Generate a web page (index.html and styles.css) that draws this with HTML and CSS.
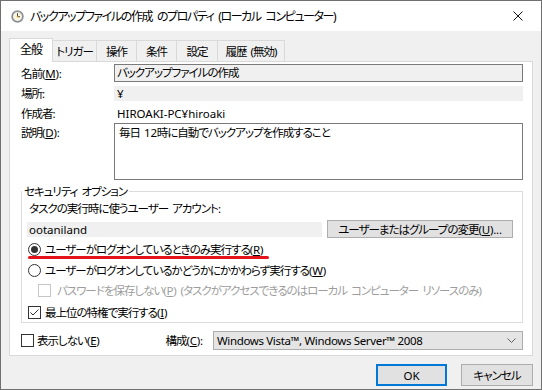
FILE: index.html
```html
<!DOCTYPE html>
<html lang="ja">
<head>
<meta charset="utf-8">
<title>プロパティ</title>
<link rel="stylesheet" href="styles.css">
</head>
<body>
<div class="window">
  <div class="titlebar">
    <svg class="appicon" width="13" height="13" viewBox="0 0 13 13">
      <circle cx="6.5" cy="6.5" r="6.2" fill="#8d949c"/>
      <circle cx="6.5" cy="6.5" r="4.9" fill="#fbf6e2" stroke="#5f666e" stroke-width="0.6"/>
      <path d="M6.5 3.2V6.7H9" fill="none" stroke="#444" stroke-width="1"/>
      <circle cx="6.5" cy="6.6" r="0.8" fill="#d9a400"/>
    </svg>
    <span class="title">バックアップファイルの作成 のプロパティ (ローカル コンピューター)</span>
    <span class="close">
      <svg width="10" height="10" viewBox="0 0 10 10"><path d="M0.5 0.5L9.5 9.5M9.5 0.5L0.5 9.5" stroke="#111" stroke-width="1"/></svg>
    </span>
  </div>

  <div class="tabs">
    <div class="tab sel w1">全般</div>
    <div class="tab w2">トリガー</div>
    <div class="tab w3">操作</div>
    <div class="tab w3">条件</div>
    <div class="tab w4">設定</div>
    <div class="tab w5">履歴 (無効)</div>
  </div>

  <div class="panel">
    <div class="row r-name">
      <span class="lbl">名前<span class="latin">(<u>M</u>):</span></span>
      <div class="field ro">バックアップファイルの作成</div>
    </div>
    <div class="row r-loc">
      <span class="lbl">場所:</span>
      <div class="field flat">¥</div>
    </div>
    <div class="row r-auth">
      <span class="lbl">作成者:</span>
      <span class="val latin">HIROAKI-PC¥hiroaki</span>
    </div>
    <div class="row r-desc">
      <span class="lbl">説明<span class="latin">(<u>D</u>):</span></span>
      <div class="textarea">毎日 <span class="latin">12</span>時に自動でバックアップを作成すること</div>
    </div>

    <fieldset class="group">
      <legend>セキュリティ オプション</legend>
      <div class="acct-label">タスクの実行時に使うユーザー アカウント:</div>
      <div class="acct-row">
        <div class="acct-field latin">ootaniland</div>
        <div class="btn change">ユーザーまたはグループの変更<span class="latin">(<u>U</u>)...</span></div>
      </div>
      <div class="opt o1">
        <svg class="box" width="13" height="13" viewBox="0 0 13 13"><circle cx="6.5" cy="6.5" r="6" fill="#fff" stroke="#333" stroke-width="1"/><circle cx="6.5" cy="6.5" r="3.5" fill="#333"/></svg>
        <span>ユーザーがログオンしているときのみ実行する<span class="latin">(<u>R</u>)</span></span>
        <span class="mark"></span>
      </div>
      <div class="opt o2">
        <svg class="box" width="13" height="13" viewBox="0 0 13 13"><circle cx="6.5" cy="6.5" r="6" fill="#fff" stroke="#333" stroke-width="1"/></svg>
        <span>ユーザーがログオンしているかどうかにかかわらず実行する<span class="latin">(<u>W</u>)</span></span>
      </div>
      <div class="opt o3 disabled">
        <svg class="box" width="13" height="13" viewBox="0 0 13 13"><rect x="0.5" y="0.5" width="12" height="12" fill="#fff" stroke="#c6c6c6" stroke-width="1"/></svg>
        <span>パスワードを保存しない<span class="latin">(<u>P</u>)</span> (タスクがアクセスできるのはローカル コンピューター リソースのみ)</span>
      </div>
      <div class="opt o4">
        <svg class="box" width="13" height="13" viewBox="0 0 13 13"><rect x="0.5" y="0.5" width="12" height="12" fill="#fff" stroke="#333" stroke-width="1"/><path d="M2.5 6.5L5 9L10.5 3.5" fill="none" stroke="#333" stroke-width="1"/></svg>
        <span>最上位の特権で実行する<span class="latin">(<u>I</u>)</span></span>
      </div>
    </fieldset>

    <div class="bottom">
      <div class="opt hide">
        <svg class="box" width="13" height="13" viewBox="0 0 13 13"><rect x="0.5" y="0.5" width="12" height="12" fill="#fff" stroke="#333" stroke-width="1"/></svg>
        <span>表示しない<span class="latin">(<u>E</u>)</span></span>
      </div>
      <span class="cfg-label">構成<span class="latin">(<u>C</u>):</span></span>
      <div class="combo">
        <span class="combo-text">Windows Vista™, Windows Server™ 2008</span>
        <svg class="chev" width="9" height="5" viewBox="0 0 9 5"><path d="M0.5 0.5L4.5 4.5L8.5 0.5" fill="none" stroke="#606060" stroke-width="1"/></svg>
      </div>
    </div>
  </div>

  <div class="buttons">
    <div class="btn ok latin">OK</div>
    <div class="btn cancel">キャンセル</div>
  </div>
</div>
</body>
</html>
```

FILE: styles.css
```css
html, body {
  margin: 0;
  padding: 0;
  background: #ffffff;
}

body {
  font-family: "Noto Sans", "Noto Sans CJK JP", sans-serif;
  font-size: 11.5px;
  letter-spacing: -1px;
  word-spacing: 2px;
  font-feature-settings: "palt";
  color: #000;
}

.latin {
  letter-spacing: -0.2px;
  word-spacing: 0;
}

u {
  text-decoration: underline;
  text-underline-offset: 1px;
}

.window {
  width: 542px;
  height: 390px;
  box-sizing: border-box;
  border: 1px solid #707070;
  background: #f0f0f0;
  display: flex;
  flex-direction: column;
  overflow: hidden;
}

/* title bar */
.titlebar {
  height: 30px;
  flex: none;
  background: #fff;
  display: flex;
  align-items: center;
}

.appicon {
  margin-left: 10px;
  flex: none;
}

.title {
  margin-left: 6px;
  line-height: 15px;
  white-space: nowrap;
  font-size: 12px;
  letter-spacing: -1.4px;
  word-spacing: 3px;
}

.close {
  margin-left: auto;
  width: 46px;
  height: 30px;
  display: flex;
  align-items: center;
  justify-content: center;
}

/* tabs */
.tabs {
  display: flex;
  align-items: flex-end;
  height: 23px;
  margin: 7px 0 0 8px;
  flex: none;
}

.tab {
  box-sizing: border-box;
  height: 21px;
  border: 1px solid #d9d9d9;
  border-bottom: none;
  margin-left: -1px;
  background: #f0f0f0;
  display: flex;
  align-items: center;
  justify-content: center;
  line-height: 15px;
  white-space: nowrap;
}

.tab.sel {
  height: 24px;
  margin-left: 0;
  margin-bottom: -1px;
  background: #fff;
  position: relative;
  z-index: 1;
  padding-bottom: 2px;
  font-size: 12px;
}

.w1 { width: 44px; }
.w2 { width: 45px; }
.w3 { width: 41px; }
.w4 { width: 42px; }
.w5 { width: 68px; }

/* panel */
.panel {
  margin: 0 8px;
  background: #fff;
  border: 1px solid #d9d9d9;
  padding: 2px 9px 5px 11px;
  flex: none;
}

.row {
  display: flex;
  align-items: center;
}

.lbl {
  width: 93px;
  flex: none;
  line-height: 15px;
}

.field {
  flex: 1;
  box-sizing: border-box;
  line-height: 15px;
  white-space: nowrap;
}

.field.ro {
  height: 18px;
  border: 1px solid #7a7a7a;
  background: #f0f0f0;
  padding: 0 2px;
  line-height: 16px;
}

.r-loc {
  margin-top: 4px;
}

.field.flat {
  height: 15px;
  background: #f0f0f0;
  padding: 0 3px;
}

.r-auth {
  margin-top: 5px;
  height: 15px;
}

.val {
  margin-left: 3px;
  line-height: 15px;
  letter-spacing: 0;
}

.r-desc {
  margin-top: 2px;
  align-items: flex-start;
}

.r-desc .lbl {
  margin-top: 2px;
}

.textarea {
  flex: 1;
  box-sizing: border-box;
  height: 57px;
  border: 1px solid #7a7a7a;
  background: #fff;
  padding: 1px 4px;
  line-height: 15px;
}

/* group box */
.group {
  margin: 4px 0 0 0;
  padding: 2px 9px 2px 6px;
  border: 1px solid #dcdcdc;
  min-width: 0;
}

.group legend {
  padding: 0 2px;
  margin-left: -6px;
  line-height: 15px;
}

.acct-label {
  line-height: 15px;
  padding-left: 1px;
}

.acct-row {
  display: flex;
  align-items: center;
  height: 18px;
  margin-top: 4px;
}

.acct-field {
  width: 295px;
  box-sizing: border-box;
  height: 15px;
  line-height: 15px;
  background: #f0f0f0;
  margin-left: -1px;
  padding-left: 2px;
  letter-spacing: 0;
}

.btn {
  box-sizing: border-box;
  background: #e1e1e1;
  border: 1px solid #adadad;
  display: flex;
  align-items: center;
  justify-content: center;
  line-height: 15px;
  white-space: nowrap;
}

.btn.change {
  margin-left: auto;
  width: 186px;
  height: 18px;
}

.opt {
  display: flex;
  align-items: center;
  height: 16px;
  line-height: 15px;
  white-space: nowrap;
  position: relative;
}

.opt .box {
  flex: none;
  margin-right: 4px;
}

.o1 { margin-top: 3px; }
.o2 { margin-top: 5px; }
.o3 { margin-top: 4px; }
.o4 { margin-top: 6px; }

.o3 .box {
  margin-left: 10px;
  margin-right: 6px;
}

.disabled {
  color: #9d9d9d;
}

.mark {
  position: absolute;
  left: 0;
  top: 15px;
  width: 241px;
  height: 3px;
  border-radius: 2px;
  background: #e5141c;
}

/* bottom row */
.bottom {
  display: flex;
  align-items: center;
  height: 19px;
  margin-top: 8px;
}

.hide .box {
  margin-right: 3px;
}

.cfg-label {
  margin-left: auto;
  margin-right: 10px;
  line-height: 15px;
}

.combo {
  width: 310px;
  height: 19px;
  box-sizing: border-box;
  background: #e5e5e5;
  border: 1px solid #adadad;
  display: flex;
  align-items: center;
  padding: 0 6px 0 3px;
  line-height: 15px;
  white-space: nowrap;
}

.combo-text {
  letter-spacing: -0.35px;
  word-spacing: 0;
}

.chev {
  margin-left: auto;
}

/* dialog buttons */
.buttons {
  display: flex;
  justify-content: flex-end;
  gap: 14px;
  margin: 8px 8px 0 0;
}

.btn.ok {
  width: 71px;
  height: 22px;
  border: 2px solid #0078d7;
  letter-spacing: 0;
}

.btn.cancel {
  width: 72px;
  height: 22px;
}
```
